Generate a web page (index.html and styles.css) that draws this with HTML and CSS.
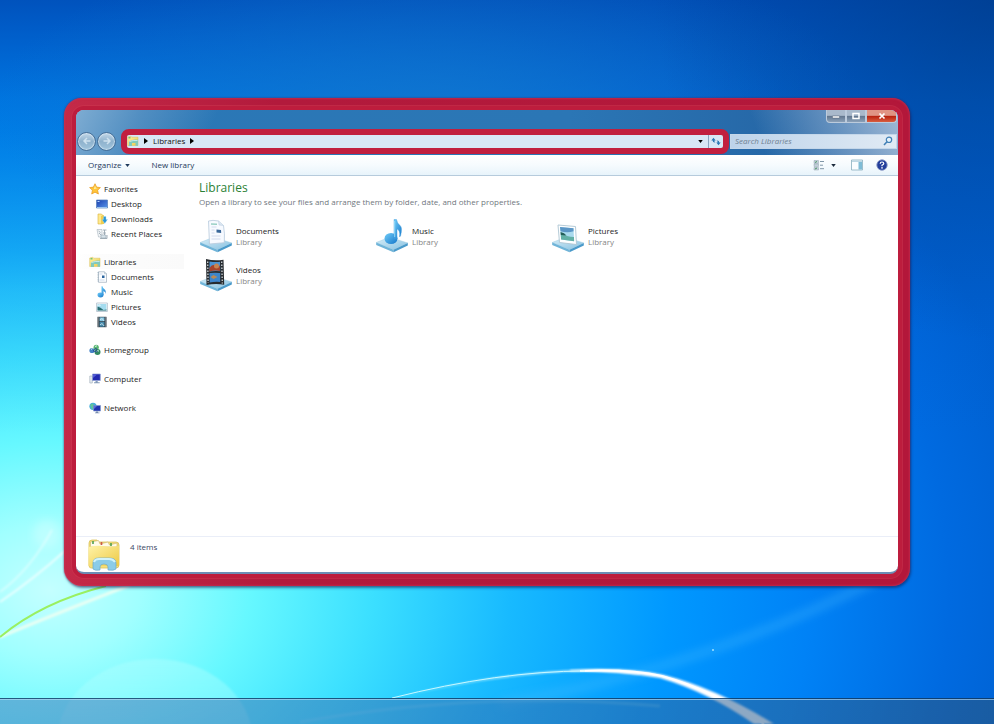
FILE: index.html
```html
<!DOCTYPE html>
<html lang="en">
<head>
<meta charset="utf-8">
<title>Libraries</title>
<link rel="stylesheet" href="styles.css">
</head>
<body>
<svg class="wallpaper" viewBox="0 0 994 724" preserveAspectRatio="none" aria-hidden="true">
  <defs>
    <radialGradient id="glow" gradientUnits="userSpaceOnUse" cx="0" cy="0" r="1000" gradientTransform="translate(50 590) scale(1 .74)">
      <stop offset="0" stop-color="#c4ffff"/>
      <stop offset=".09" stop-color="#a0ffff"/>
      <stop offset=".2" stop-color="#66f8ff"/>
      <stop offset=".32" stop-color="#3ce0ff"/>
      <stop offset=".46" stop-color="#18baff"/>
      <stop offset=".62" stop-color="#0098ff"/>
      <stop offset=".76" stop-color="#0082f6"/>
      <stop offset=".9" stop-color="#006ae0"/>
      <stop offset="1" stop-color="#0060d0"/>
    </radialGradient>
    <linearGradient id="sky" x1="0" y1="0" x2="0" y2="1">
      <stop offset="0" stop-color="#0048b0" stop-opacity=".8"/>
      <stop offset=".14" stop-color="#005ac4" stop-opacity=".5"/>
      <stop offset=".4" stop-color="#0058c8" stop-opacity=".12"/>
      <stop offset=".6" stop-color="#0058c8" stop-opacity="0"/>
    </linearGradient>
    <radialGradient id="haze" gradientUnits="userSpaceOnUse" cx="0" cy="0" r="1" gradientTransform="translate(430 110) scale(440 170)">
      <stop offset="0" stop-color="#1478cc" stop-opacity=".75"/>
      <stop offset="1" stop-color="#1478cc" stop-opacity="0"/>
    </radialGradient>
    <radialGradient id="corner" gradientUnits="userSpaceOnUse" cx="994" cy="0" r="340">
      <stop offset="0" stop-color="#003880" stop-opacity=".6"/>
      <stop offset="1" stop-color="#003880" stop-opacity="0"/>
    </radialGradient>
    <linearGradient id="arc" x1="0" y1="0" x2="1" y2="0">
      <stop offset="0" stop-color="#a0f4ff" stop-opacity=".5"/>
      <stop offset=".6" stop-color="#e0faff"/>
      <stop offset="1" stop-color="#fff"/>
    </linearGradient>
    <linearGradient id="orb" x1="0" y1="0" x2="0" y2="1">
      <stop offset="0" stop-color="#b0ffff" stop-opacity=".45"/>
      <stop offset="1" stop-color="#b0ffff" stop-opacity=".05"/>
    </linearGradient>
    <filter id="soft" x="-20%" y="-20%" width="140%" height="140%"><feGaussianBlur stdDeviation="1"/></filter>
    <filter id="softer" x="-20%" y="-20%" width="140%" height="140%"><feGaussianBlur stdDeviation="5"/></filter>
  </defs>
  <rect width="994" height="724" fill="url(#glow)"/>
  <rect width="994" height="724" fill="url(#sky)"/>
  <rect width="994" height="300" fill="url(#haze)"/>
  <rect x="594" width="400" height="400" fill="url(#corner)"/>
  <circle cx="47" cy="534" r="14" fill="#d8ffff" opacity=".45" filter="url(#softer)"/>
  <ellipse cx="155" cy="742" rx="98" ry="83" fill="url(#orb)" filter="url(#soft)"/>
  <path d="M0 602Q35 578 66 550" stroke="#e8ffff" stroke-width="2" fill="none" filter="url(#soft)"/>
  <path d="M0 592Q30 570 52 530" stroke="#e8ffff" stroke-width="2" fill="none" opacity=".6" filter="url(#soft)"/>
  <path d="M0 637Q45 618 130 585" stroke="#e8fff4" stroke-width="3" fill="none" filter="url(#soft)"/>
  <path d="M0 637Q42 602 106 586" stroke="#9af060" stroke-width="2" fill="none"/>
  <path d="M500 704Q700 670 880 578" stroke="#50c0ff" stroke-width="8" opacity=".35" fill="none" filter="url(#softer)"/>
  <path d="M300 722Q480 690 660 706" stroke="#90e8ff" stroke-width="3" opacity=".3" fill="none" filter="url(#soft)"/>
  <path d="M390 699Q500 671 585 670Q615 669 640 673L640 674Q615 671 585 671Q500 673 390 699Z" fill="url(#arc)" filter="url(#soft)"/>
  <path d="M570 670Q630 667 664 675Q718 689 774 724L754 724Q708 692 660 678Q620 671 570 671Z" fill="#fff" filter="url(#soft)"/>
  <path d="M580 671Q630 669 662 676Q712 690 764 724" fill="none" stroke="#fff" stroke-width="2"/>
  <path d="M392 698Q500 671 585 671" fill="none" stroke="#c8f8ff" stroke-width="1"/>
  <circle cx="713" cy="650" r="1" fill="#9fe0ff"/>
</svg>

<svg class="symbols" aria-hidden="true">
  <defs>
    <linearGradient id="base-fill" x1="0" y1="0" x2="1" y2="1"><stop offset="0" stop-color="#d8eff9"/><stop offset="1" stop-color="#86c0e0"/></linearGradient>
    <linearGradient id="note-fill" x1="0" y1="0" x2="1" y2="1"><stop offset="0" stop-color="#72cdf8"/><stop offset="1" stop-color="#1376ca"/></linearGradient>
    <linearGradient id="folder-fill" x1="0" y1="0" x2="1" y2="1"><stop offset="0" stop-color="#fff3a8"/><stop offset="1" stop-color="#edc944"/></linearGradient>
    <linearGradient id="screen-fill" x1="0" y1="0" x2="1" y2="1"><stop offset="0" stop-color="#1b3fae"/><stop offset="1" stop-color="#5794ea"/></linearGradient>
  </defs>
  <symbol id="i-star" viewBox="0 0 12 12"><path d="M6 .7l1.600 3.400 3.800.5-2.800 2.600.8 3.800L6 9.200 2.700 11l.7-3.800L.6 4.600l3.800-.5z" fill="#ffc53a" stroke="#e89a20" stroke-width=".7"/><path d="M6 2.500l.8 2.200 2 .2-4 1.400z" fill="#fff0a0"/></symbol>
  <symbol id="i-desktop" viewBox="0 0 12 12"><path d="M.5 2h11v8H.5z" fill="url(#screen-fill)" stroke="#557eba" stroke-width=".7"/><path d="M1 9h10v1H1z" fill="#9cc5ed"/><path d="M1.500 3h2v1h-2z" fill="#b4d4ff"/></symbol>
  <symbol id="i-downloads" viewBox="0 0 12 12"><path d="M2 1h3.500l1 1V11H2z" fill="#ffe98d" stroke="#d8b13a" stroke-width=".6"/><path d="M5 3l3-1v9H5z" fill="#f0cd50"/><path d="M7.500 3.500h2.500v3h1.500L8.800 10.500 6 6.500h1.500z" fill="#2a96d8" stroke="#a5dcf8" stroke-width=".4"/></symbol>
  <symbol id="i-recent" viewBox="0 0 12 12"><path d="M1 1.500h5V9H2.500z" fill="#f2f5f7" stroke="#a5b2bc" stroke-width=".6"/><path d="M2.500 3l2 1.500M3 5l2 2M7 2h3.500M8.500 2v7M7 5h3M4 10.500h7V7" stroke="#91a0ab" stroke-width=".8" fill="none"/><path d="M5 7h5v3H5z" fill="#d8e3ea" stroke="#8b99a4" stroke-width=".5"/></symbol>
  <symbol id="i-library" viewBox="0 0 12 12"><path d="M.7 2l3-.8 1 1H11v8.300H.7z" fill="url(#folder-fill)" stroke="#d9bc55" stroke-width=".5"/><path d="M1.500 2h2v1.500h-2z" fill="#75c578"/><path d="M2 6.500Q6 4 11 4.800V10.800H8.500V8H5v3H2z" fill="#83c9b9"/><path d="M2.500 6.500Q6 5 10.500 5.500" stroke="#d3f2f9" stroke-width=".8" fill="none"/></symbol>
  <symbol id="i-document" viewBox="0 0 12 12"><path d="M2.500.8h6l2 2v8.500h-8z" fill="#fbfdff" stroke="#9daebc" stroke-width=".7"/><path d="M8.500.8v2h2" fill="#dce6ee" stroke="#9daebc" stroke-width=".5"/><path d="M6 4.500h2.500V7H6z" fill="#2c659e"/><path d="M3.500 3h3M3.500 9h5" stroke="#b7c8dc" stroke-width=".6"/><path d="M2 1v10" stroke="#7a96a8" stroke-width=".6" stroke-dasharray="1 .7"/></symbol>
  <symbol id="i-music" viewBox="0 0 12 12"><ellipse cx="4.500" cy="9" rx="3" ry="2.400" fill="url(#note-fill)"/><path d="M5.500 9V.3H6.500q.3 2 2 3T9.600 8q.2-2.200-2.100-3.100V9z" fill="url(#note-fill)"/></symbol>
  <symbol id="i-picture" viewBox="0 0 12 12"><path d="M.6 2h10.800v8.500H.6z" fill="#fff" stroke="#a5b6c4" stroke-width=".7"/><path d="M1.500 3h9v6.500h-9z" fill="#a4dcef"/><path d="M1.500 5.500q3 .500 6 3.500l3-.5v1h-9z" fill="#286d73"/><path d="M2 4q2-1 3 .500H2" fill="#fff"/></symbol>
  <symbol id="i-video" viewBox="0 0 12 12"><path d="M1.500.8h9v10.400h-9z" fill="#29343d"/><path d="M3.500 1.300h5v4h-5z" fill="#82c2df"/><path d="M3.500 6h5v4.700h-5z" fill="#4688a9"/><path d="M4 4q2-3 4 1M4 9q2-3 4 1" stroke="#d4eff6" fill="none" stroke-width=".8"/><path d="M2.400 1.500v10M9.600 1.500v10" stroke="#d6dde1" stroke-width=".8" stroke-dasharray="1 1"/></symbol>
  <symbol id="i-homegroup" viewBox="0 0 12 12"><circle cx="3" cy="6.500" r="2.600" fill="#4482c6"/><circle cx="7.200" cy="3.300" r="2.600" fill="#58b470"/><circle cx="8.500" cy="8" r="3" fill="#328a61"/><path d="M2 5.500l1.500-1M6 2.500l2-.7M7 8q1-2 3-1" stroke="#d7f5e4" fill="none"/><path d="M4 7l3-3 1 4z" fill="none" stroke="#264d92" stroke-width=".8"/></symbol>
  <symbol id="i-computer" viewBox="0 0 12 12"><path d="M.8 3h2.500v7H.8z" fill="#e8edf2" stroke="#9aa7b5" stroke-width=".6"/><path d="M3.500 1h7.800v6.500H3.500z" fill="#2229b0" stroke="#8d9ed2" stroke-width=".7"/><path d="M4 1.500h4L4 5z" fill="#555ed8"/><path d="M6.500 8h2.200v1.300h2v1H5v-1h1.500z" fill="#849bb9"/></symbol>
  <symbol id="i-network" viewBox="0 0 12 12"><circle cx="4" cy="4.300" r="3.600" fill="#45aedb"/><path d="M1 3l2-1.500 2 1-1 2 1 2-2 1z" fill="#60c49b"/><path d="M4.500 3.500h7V9h-7z" fill="#1f32b0" stroke="#8299cc" stroke-width=".7"/><path d="M5 4h3L5 7z" fill="#5b6cdc"/><path d="M7 9.500h2v1h1.500v.8H6v-.8h1z" fill="#778cae"/></symbol>

  <symbol id="b-base" viewBox="0 0 33 34"><path d="M.7 23.500L14 18.300 32.300 24 18 30.700z" fill="url(#base-fill)" stroke="#9fcde2" stroke-width=".5"/><path d="M.7 23.500L18 30.700v2.600L.7 26z" fill="#6fb4d8"/><path d="M18 30.700L32.300 24v2.500L18 33.300z" fill="#4a9aca"/></symbol>
  <symbol id="b-document" viewBox="0 0 33 34"><use href="#b-base"/><path d="M9 2q4-1.300 10 0l5 4.500q1.500 8 .8 17.200L10 25z" fill="#f7faff" stroke="#b6c9dc" stroke-width=".8"/><path d="M19 2l.5 4 4.500.5" fill="#dbe7f2" stroke="#b6c9dc" stroke-width=".5"/><path d="M11.500 5l6 .2" stroke="#6bbba8" stroke-width="1"/><path d="M17 10.500l4.500.5.200 3-4.700-.5z" fill="#39679a"/><path d="M12 8h5M12 11h3M12 14h3M12 17h9M12 20h9" stroke="#c9d2ea" stroke-width=".8"/></symbol>
  <symbol id="b-music" viewBox="0 0 33 34"><use href="#b-base"/><ellipse cx="15.500" cy="19.500" rx="6.500" ry="5.500" fill="url(#note-fill)"/><path d="M18.500 20V.5h2.500q.7 4 3.500 6t.500 10.500q-.5 1-1 .5 1-6-2.500-7.500V20z" fill="url(#note-fill)" stroke="#3a9bdc" stroke-width=".4"/><path d="M19.200 2v16" stroke="#a8e3fb" stroke-width=".8"/></symbol>
  <symbol id="b-picture" viewBox="0 0 33 34"><use href="#b-base"/><path d="M6.500 6l17.500 1.500L25 25.500 8 23.500z" fill="#fdfeff" stroke="#adc5d3" stroke-width=".9"/><path d="M8.500 8l13.500 1.300.6 13L9.600 20.500z" fill="#a9daee"/><path d="M8.500 8l13.500 1.300v3q-6 2-13 0z" fill="#5b96c6"/><path d="M9.200 14q6 4 13.300 4l.1 4.300L9.600 20.500z" fill="#62b0a6"/><path d="M9 13q4 .500 6 3.500l-5.600-.5z" fill="#245e58"/></symbol>
  <symbol id="b-video" viewBox="0 0 33 34"><use href="#b-base"/><path d="M6.500 1q8 2 17.500.700l.7 25Q16 25 7 27z" fill="#272b2f"/><path d="M10 3.500q6 1 10.500.3l.2 9.500q-5-.5-10.700.2z" fill="#4b94d4"/><path d="M10 15q6-.500 10.700 0V24q-5-.5-10.500.5z" fill="#3d85cb"/><path d="M10 10q3-5 6-2t4.500-1v6q-5-1-10.500.5z" fill="#a9432b"/><circle cx="17" cy="8" r="2.500" fill="#c98450"/><path d="M14 17l4 2-4 2-3-2z" fill="#b98a58"/><path d="M8.200 3.500L8.600 25M22.200 3.500l.6 22" stroke="#dce3e6" stroke-width="1.200" stroke-dasharray="1.500 1.500"/></symbol>
  <symbol id="b-folders" viewBox="0 0 34 34"><path d="M2 5q0-3 3-3h5l1 2h18q3 0 3 3v20q0 3-3 3H4q-2 0-2-3z" fill="#f3df7b" stroke="#dac25d" stroke-width=".8"/><path d="M3.500 4l8-1.500L13 6l8-2 1.500 3L30 5v4H3.500z" fill="#fffbe9" stroke="#cdb46a" stroke-width=".6"/><path d="M6 3v3M24 5v3" stroke="#4fa050" stroke-width="1.600"/><path d="M14.500 4v3" stroke="#cd584c" stroke-width="1.600"/><path d="M1.500 9q8-2 15-1t15.500 0v20H1.500z" fill="url(#folder-fill)"/><path d="M6 31V25q0-5 6-5h10q7 0 7 5v6q-2 2-8 1v-3q0-3-4-3t-4 3v3q-5 1-7-1z" fill="#8bcce8" stroke="#6baacc" stroke-width=".7"/><path d="M7 24q1-3 5-3h10q4 0 6 3" stroke="#d1f3fa" stroke-width="2" fill="none"/></symbol>
</svg>

<main class="desktop">
  <section class="frame" aria-label="Libraries window">
    <div class="window">
      <header class="glass">
        <div class="caption">
          <button class="cap" aria-label="Minimize"><svg width="10" height="8" viewBox="0 0 10 8"><path d="M1.500 4h7v2h-7z" fill="#fff" stroke="#57677b" stroke-width=".5"/></svg></button>
          <button class="cap" aria-label="Maximize"><svg width="10" height="8" viewBox="0 0 10 8"><path d="M2 1.500h6v5H2z" fill="none" stroke="#fff" stroke-width="1.500"/></svg></button>
          <button class="cap cap-close" aria-label="Close"><svg width="10" height="8" viewBox="0 0 10 8"><path d="M2.500 1.500l5 5M7.500 1.500l-5 5" stroke="#fff" stroke-width="1.700"/></svg></button>
        </div>
        <div class="navrow">
          <button class="round" aria-label="Back"><svg width="10" height="10" viewBox="0 0 10 10"><path d="M8.500 5H2M5 2L2 5l3 3" stroke="#cfe2ef" stroke-width="1.500" fill="none"/></svg></button>
          <button class="round" aria-label="Forward"><svg width="10" height="10" viewBox="0 0 10 10"><path d="M1.500 5H8M5 2l3 3-3 3" stroke="#cfe2ef" stroke-width="1.500" fill="none"/></svg></button>
          <div class="address">
            <svg class="ico" aria-hidden="true"><use href="#i-library"/></svg>
            <svg class="arrow" viewBox="0 0 4 6" aria-hidden="true"><path d="M0 0l4 3-4 3z"/></svg>
            <button class="crumb">Libraries</button>
            <svg class="arrow" viewBox="0 0 4 6" aria-hidden="true"><path d="M0 0l4 3-4 3z"/></svg>
            <span class="grow"></span>
            <button class="drop" aria-label="Previous locations"><svg width="5" height="3" viewBox="0 0 6 4"><path d="M0 0h6L3 4z"/></svg></button>
            <button class="refresh" aria-label="Refresh"><svg width="10" height="9" viewBox="0 0 10 9"><path d="M.3 3.500L2.500.8l2.200 2.700H3.400Q3.200 5 4.500 5.500 1.500 5.800 1.700 3.500zM9.700 5.500L7.500 8.200 5.300 5.500h1.300Q6.800 4 5.500 3.500 8.500 3.200 8.300 5.500z" fill="#2c78b6"/></svg></button>
          </div>
          <label class="search">
            <input type="search" placeholder="Search Libraries" aria-label="Search Libraries">
            <svg width="10" height="10" viewBox="0 0 10 10" aria-hidden="true"><circle cx="6" cy="3.800" r="2.700" fill="#e4f2fb" stroke="#4180b6" stroke-width="1.200"/><path d="M4 5.800L1 9" stroke="#4180b6" stroke-width="1.600"/></svg>
          </label>
        </div>
      </header>

      <div class="toolbar">
        <button class="tool">Organize <svg width="5" height="3" viewBox="0 0 6 4" aria-hidden="true"><path d="M0 0h6L3 4z" fill="#1e395b"/></svg></button>
        <button class="tool">New library</button>
        <span class="grow"></span>
        <button class="tool view" aria-label="Change your view"><svg width="12" height="12" viewBox="0 0 12 12"><path d="M1 1.500h4.500v3H1zM1 5h4.500v2.500H1zM1 8.500h4.500V11H1z" fill="#c2d0d9" stroke="#94a5b2" stroke-width=".5"/><path d="M7 2.500h4M7 6.200h3M7 9.700h4" stroke="#8197a8"/><path d="M2 3.500l2-1M2 10l2-1" stroke="#4b9466"/></svg><svg width="5" height="3" viewBox="0 0 6 4"><path d="M0 0h6L3 4z" fill="#1c2a3c"/></svg></button>
        <button class="tool" aria-label="Show the preview pane"><svg width="12" height="12" viewBox="0 0 12 12"><path d="M.5 1h11v10H.5z" fill="#fafdff" stroke="#88adbe" stroke-width=".8"/><path d="M1 1.500h10v1.500H1z" fill="#bed8e4"/><path d="M7.500 3H11v7.500H7.500z" fill="#7fbcd6"/></svg></button>
        <button class="tool" aria-label="Get help"><svg width="12" height="12" viewBox="0 0 12 12"><circle cx="6" cy="6" r="5.200" fill="#243f9c" stroke="#8494c2" stroke-width=".9"/><path d="M4.200 4.700Q4.300 3 6 3t1.800 1.500Q7.800 5.500 6 6.200v1" stroke="#fff" stroke-width="1.200" fill="none"/><circle cx="6" cy="8.900" r=".8" fill="#fff"/></svg></button>
      </div>

      <div class="body">
        <nav class="tree" aria-label="Navigation pane">
          <ul>
            <li><a href="#"><svg class="ico"><use href="#i-star"/></svg>Favorites</a></li>
            <li class="sub"><a href="#"><svg class="ico"><use href="#i-desktop"/></svg>Desktop</a></li>
            <li class="sub"><a href="#"><svg class="ico"><use href="#i-downloads"/></svg>Downloads</a></li>
            <li class="sub"><a href="#"><svg class="ico"><use href="#i-recent"/></svg>Recent Places</a></li>
          </ul>
          <ul>
            <li class="selected"><a href="#"><svg class="ico"><use href="#i-library"/></svg>Libraries</a></li>
            <li class="sub"><a href="#"><svg class="ico"><use href="#i-document"/></svg>Documents</a></li>
            <li class="sub"><a href="#"><svg class="ico"><use href="#i-music"/></svg>Music</a></li>
            <li class="sub"><a href="#"><svg class="ico"><use href="#i-picture"/></svg>Pictures</a></li>
            <li class="sub"><a href="#"><svg class="ico"><use href="#i-video"/></svg>Videos</a></li>
          </ul>
          <ul class="roots">
            <li><a href="#"><svg class="ico"><use href="#i-homegroup"/></svg>Homegroup</a></li>
            <li><a href="#"><svg class="ico"><use href="#i-computer"/></svg>Computer</a></li>
            <li><a href="#"><svg class="ico"><use href="#i-network"/></svg>Network</a></li>
          </ul>
        </nav>
        <section class="content">
          <h1>Libraries</h1>
          <p class="hint">Open a library to see your files and arrange them by folder, date, and other properties.</p>
          <div class="items">
            <a class="item" href="#"><svg class="big"><use href="#b-document"/></svg><span class="name">Documents<small>Library</small></span></a>
            <a class="item" href="#"><svg class="big"><use href="#b-music"/></svg><span class="name">Music<small>Library</small></span></a>
            <a class="item" href="#"><svg class="big"><use href="#b-picture"/></svg><span class="name">Pictures<small>Library</small></span></a>
            <a class="item" href="#"><svg class="big"><use href="#b-video"/></svg><span class="name">Videos<small>Library</small></span></a>
          </div>
        </section>
      </div>

      <footer class="details">
        <svg class="big" aria-hidden="true"><use href="#b-folders"/></svg>
        <span>4 items</span>
      </footer>
    </div>
  </section>
</main>
<div class="taskbar"></div>
</body>
</html>
```
FILE: styles.css
```css
* { box-sizing: border-box; }

body {
  margin: 0;
  min-height: 100vh;
  display: flex;
  flex-direction: column;
  font: 8px/12px "Open Sans", "Noto Sans", sans-serif;
  color: #1c1c1c;
  background: #0a80e0;
}

button, input { font: inherit; color: inherit; }

button {
  display: inline-flex;
  align-items: center;
  justify-content: center;
  padding: 0;
  border: 0;
  background: none;
}

a { color: inherit; text-decoration: none; }
ul { list-style: none; margin: 0; padding: 0; }
svg { flex: none; display: block; }

.symbols { position: absolute; width: 0; height: 0; }
.wallpaper { position: absolute; inset: 0; width: 100%; height: 100%; }
.grow { flex: 1; }
.ico { width: 12px; height: 12px; }
.big { width: 34px; height: 34px; }

/* Desktop and window frame */
.desktop {
  position: relative;
  flex: 1;
  display: flex;
  padding: 98px 84px 112px 64px;
}

.frame {
  flex: 1;
  display: flex;
  padding: 12px;
  border-radius: 18px;
  background: linear-gradient(90deg, #c42a48 0, #b21a3c 25%, #b3173a 100%);
  box-shadow: 0 0 2px rgba(110, 30, 80, .8), 1px 2px 3px rgba(0, 30, 80, .5), inset 0 0 2px 1px rgba(196, 50, 84, .6);
}

.window {
  flex: 1;
  display: flex;
  flex-direction: column;
  overflow: hidden;
  border-radius: 8px;
  background: #fff;
  border-bottom: 2px solid #6c8db4;
  box-shadow: 0 0 0 4px #bd1d3d, 0 0 0 5px rgba(206, 56, 80, .5);
}

/* Glass header */
.glass {
  padding: 0 1px;
  background:
    linear-gradient(115deg, rgba(170, 200, 225, .65) 0, rgba(120, 165, 205, .5) 60px, rgba(120, 165, 205, 0) 130px),
    linear-gradient(250deg, rgba(190, 208, 228, .8) 0, rgba(150, 180, 212, .6) 60px, rgba(120, 160, 200, 0) 140px),
    linear-gradient(90deg, #2b78b6, #2b76b5 60%, #235f9f);
}

.caption { display: flex; justify-content: flex-end; }

.cap {
  width: 20px;
  height: 13px;
  border: 1px solid #bccbdc;
  border-top: 0;
  background: linear-gradient(#a9b9cb 45%, #61758d 50%, #8ba1b9);
}

.cap:first-child { border-radius: 0 0 0 4px; }

.cap-close {
  width: 31px;
  border-radius: 0 0 4px 0;
  background: linear-gradient(#e09484 45%, #b8200e 50%, #d85e40);
}

.navrow { display: flex; align-items: center; height: 28px; margin-top: 4px; }

.round {
  width: 19px;
  height: 19px;
  margin-right: 1px;
  border-radius: 50%;
  border: 1px solid #466f98;
  background: linear-gradient(#c2d7e8, #8fb2cd 50%, #a0c4dc);
  box-shadow: inset 0 0 1px 1px rgba(230, 242, 250, .6);
}

.address {
  flex: 1;
  display: flex;
  align-items: center;
  height: 25px;
  margin: 0 1px 0 4px;
  border: 6px solid #c11f3f;
  border-radius: 8px;
  background: #d8e7f6;
  gap: 5px;
}

.arrow { width: 4px; height: 6px; }
.crumb { color: #111; }
.drop { width: 5px; height: 12px; }
.refresh { width: 15px; align-self: stretch; border-left: 1px solid #8aa5c0; }

.search {
  display: flex;
  align-items: center;
  width: 167px;
  height: 15px;
  padding: 0 3px 0 4px;
  border: 1px solid #c4d7ea;
  background: linear-gradient(90deg, #bdd3ea, #e0eaf4);
}

.search input {
  flex: 1;
  min-width: 0;
  padding: 0;
  border: 0;
  outline: 0;
  background: none;
  appearance: none;
}

.search input::placeholder { color: #6f7f90; font-style: italic; opacity: 1; }

/* Command bar */
.toolbar {
  display: flex;
  align-items: center;
  height: 21px;
  padding: 0 10px 0 12px;
  gap: 13px;
  color: #1e395b;
  background: linear-gradient(#fff, #f6fbfe 50%, #e8f4fb);
  border-bottom: 1px solid #b6cbdc;
}

.tool { gap: 4px; }
.tool:first-child { margin-right: 8px; }
.view { gap: 6px; margin-right: 2px; }

/* Body */
.body { flex: 1; display: flex; }

.tree {
  width: 108px;
  margin-right: 15px;
  padding-top: 5px;
  display: flex;
  flex-direction: column;
  gap: 13px;
}

.tree a { display: flex; align-items: center; height: 15px; padding-left: 13px; gap: 3px; }
.tree .sub a { padding-left: 20px; }
.roots { display: grid; gap: 14px; }
.selected { background: linear-gradient(90deg, #fff, #fcfcfc 20%, #fafafa); }

.content { flex: 1; padding-top: 4px; }

h1 { margin: 0; font-size: 12px; line-height: 16px; font-weight: 400; color: #2b8136; }
.hint { margin: 0; color: #70777e; }

.items {
  display: grid;
  grid-template-columns: repeat(auto-fill, 176px);
  grid-auto-rows: 34px;
  row-gap: 5px;
  margin-top: 11px;
}

.item { display: flex; align-items: center; gap: 3px; }
.name { line-height: 11px; }
small { display: block; font-size: 8px; color: #858585; }

/* Details pane */
.details {
  display: flex;
  gap: 9px;
  height: 36px;
  padding: 1px 11px;
  color: #3a4663;
  border-top: 1px solid #eaeef8;
}

.details span { padding-top: 3px; }

.taskbar {
  position: relative;
  height: 26px;
  border-top: 1px solid rgba(10, 50, 90, .7);
  box-shadow: inset 0 1px rgba(190, 225, 250, .6);
  background: linear-gradient(90deg, rgba(70, 125, 190, .55), rgba(50, 110, 175, .55) 50%, rgba(45, 85, 120, .55));
}
```
